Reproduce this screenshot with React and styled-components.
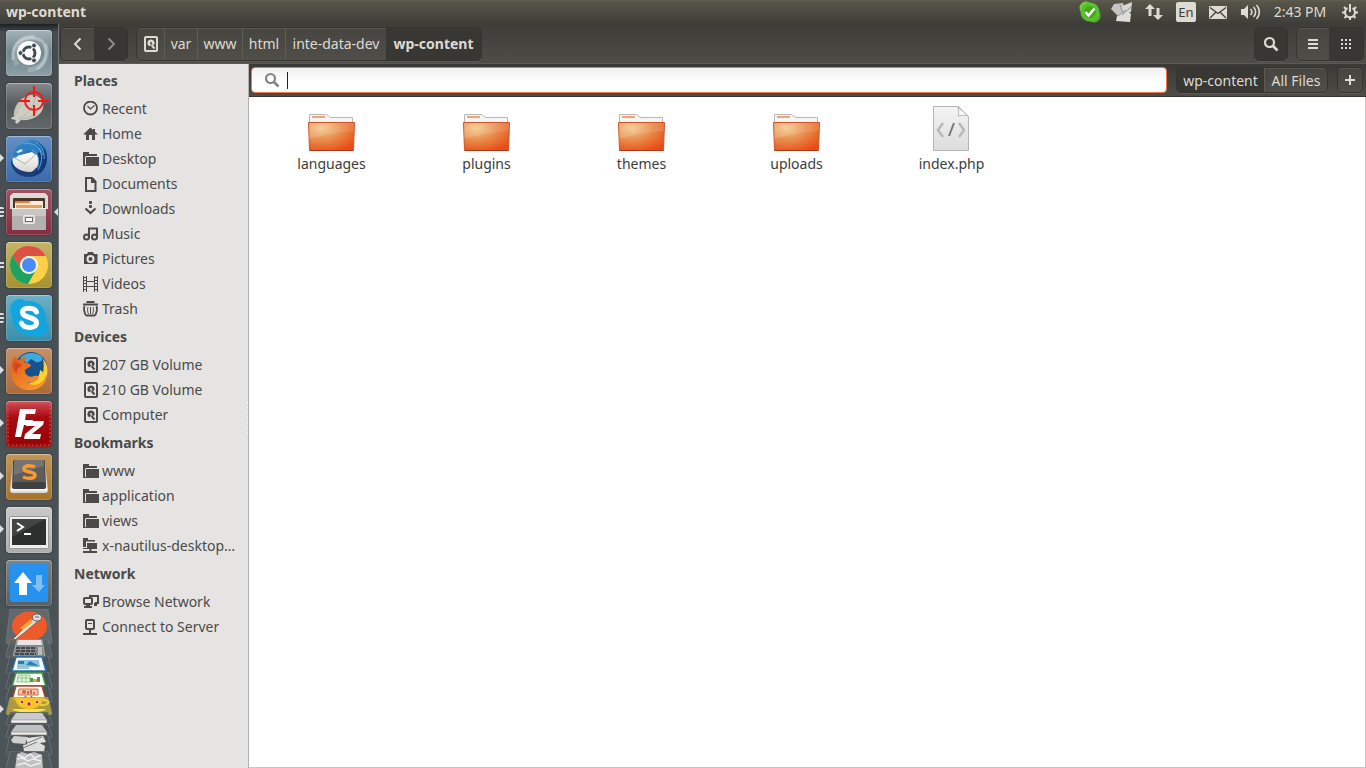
import React from "react";
import styled, { createGlobalStyle, css } from "styled-components";

const GlobalStyle = createGlobalStyle`
  * { box-sizing: border-box; }
  body { margin: 0; background: #fff; }
  body, button, input { font-family: "Noto Sans", "Open Sans", sans-serif; font-size: 14px; }
  button { margin: 0; padding: 0; border: 0; background: none; color: inherit; cursor: default; }
  svg { display: block; flex: none; }
`;

const Desktop = styled.div`
  display: flex;
  flex-direction: column;
  min-height: 100vh;
`;

/* ---------- top panel ---------- */

const Panel = styled.header`
  display: flex;
  align-items: center;
  justify-content: space-between;
  height: 24px;
  padding: 0 5px 0 6px;
  background: linear-gradient(#5f5d50 0, #575549 2px, #3e3d38 100%);
  color: #dfdbd2;
`;

const PanelTitle = styled.h1`
  margin: 0;
  font-size: 14px;
  line-height: 24px;
  font-weight: 700;
`;

const Indicators = styled.div`
  display: flex;
  align-items: center;
  gap: 10px;
`;

const Indicator = styled.button`
  display: flex;
  align-items: center;
  justify-content: center;
  height: 24px;
  min-width: 22px;
`;

const Clock = styled.time`
  width: 58px;
  text-align: center;
  white-space: nowrap;
  line-height: 24px;
`;

const LangBadge = styled.span`
  width: 20px;
  height: 20px;
  border-radius: 2px;
  background: #dfdbd2;
  color: #3c3b37;
  font-size: 13px;
  line-height: 20px;
  text-align: center;
`;

/* ---------- launcher ---------- */

const Body = styled.div`
  display: flex;
  flex: 1;
  min-height: 0;
`;

const Launcher = styled.nav`
  flex: none;
  width: 59px;
  height: calc(100vh - 24px);
  padding: 6px 7px 0 6px;
  overflow: hidden;
  border-right: 1px solid #727679;
  background: linear-gradient(#1c2022 0, #464d51 8px, #4b5458 100%);
`;

const TileList = styled.div`
  display: flex;
  flex-direction: column;
  gap: 7px;
`;

const Tile = styled.button`
  position: relative;
  flex: none;
  width: 46px;
  height: 46px;
  border-radius: 4px;
  background: ${(p) => p.$bg};
  box-shadow: inset 0 0 0 1px rgba(255, 255, 255, 0.15), inset 0 1px 1px rgba(255, 255, 255, 0.3), 0 0 2px rgba(0, 0, 0, 0.5);
`;

const mark = css`
  position: absolute;
  top: 18px;
`;

const Arrow = styled.i`
  ${mark}
  left: -6px;
  border: 4px solid transparent;
  border-left-color: #dcdedf;
  border-right-width: 0;
`;

const ActiveArrow = styled.i`
  ${mark}
  right: -7px;
  border: 5px solid transparent;
  border-right-color: #dcdedf;
  border-left-width: 0;
`;

const Bars = styled.i`
  ${mark}
  left: -6px;
  width: 4px;
  height: 10px;
  border-radius: 0 2px 2px 0;
  background: ${(p) =>
    p.$count === 3
      ? "repeating-linear-gradient(#dcdedf 0 2px, transparent 2px 4px)"
      : "linear-gradient(transparent 2px, #dcdedf 2px 4px, transparent 4px 6px, #dcdedf 6px 8px, transparent 8px)"};
`;

const Stack = styled.div`
  display: flex;
  flex-direction: column;
  margin: 3px -2px 0;
`;

const Folded = styled.button`
  position: relative;
  flex: none;
  height: ${(p) => p.$show}px;
`;

const FoldedArrow = styled.i`
  position: absolute;
  top: 8px;
  left: -4px;
  border: 4px solid transparent;
  border-left-color: #dcdedf;
  border-right-width: 0;
`;

/* ---------- window ---------- */

const Window = styled.main`
  display: flex;
  flex: 1;
  flex-direction: column;
  min-width: 0;
`;

const Toolbar = styled.div`
  display: flex;
  align-items: center;
  gap: 8px;
  height: 40px;
  padding: 0 2px 0 1px;
  border-bottom: 1px solid #5a5952;
  background: linear-gradient(#3e3d39, #4d4c46);
  color: #dfdbd2;
`;

const Group = styled.div`
  display: flex;
  border: 1px solid #35342f;
  border-radius: 5px;
  background: linear-gradient(#46453f, #4f4e48);
  box-shadow: 0 1px 0 #5b5a53, inset 0 1px 0 #57564f;
  overflow: hidden;
`;

const ToolButton = styled.button`
  display: flex;
  align-items: center;
  justify-content: center;
  width: ${(p) => p.$w || 33}px;
  height: ${(p) => p.$h || 32}px;
  border-left: ${(p) => (p.$divided ? "1px solid #5d5c55" : "0")};
  background: ${(p) => (p.$pressed ? "#383733" : "transparent")};
  color: ${(p) => (p.$muted ? "#8f8c85" : "inherit")};
  font-weight: ${(p) => (p.$bold ? 700 : 400)};
  white-space: nowrap;
`;

const Spacer = styled.div`
  flex: 1;
`;

const Columns = styled.div`
  display: flex;
  flex: 1;
`;

const Sidebar = styled.aside`
  position: relative;
  flex: none;
  width: 190px;
  padding-top: 1px;
  border-right: 1px solid #b3b0ac;
  background: #e6e4e2;
  color: #4a4a4a;
`;

const Grip = styled.i`
  position: absolute;
  top: 338px;
  right: 0;
  width: 1px;
  height: 31px;
  background: repeating-linear-gradient(#fff 0 1px, transparent 1px 5px);
`;

const SectionTitle = styled.h2`
  margin: 0;
  padding-left: 15px;
  font-size: 14px;
  line-height: 31px;
  font-weight: 700;
`;

const PlaceList = styled.ul`
  margin: 0;
  padding: 0;
  list-style: none;
`;

const Place = styled.a`
  display: flex;
  align-items: center;
  gap: 3px;
  height: 25px;
  padding: 0 4px 0 24px;
  color: inherit;
  text-decoration: none;
`;

const PlaceName = styled.span`
  overflow: hidden;
  text-overflow: ellipsis;
  white-space: nowrap;
  line-height: 25px;
`;

const Content = styled.section`
  display: flex;
  flex: 1;
  flex-direction: column;
  min-width: 0;
  background: #fff;
`;

const SearchBar = styled.div`
  display: flex;
  align-items: center;
  gap: 9px;
  height: 33px;
  padding: 0 3px 0 2px;
  border-bottom: 1px solid #35342f;
  background: linear-gradient(#3a3935, #4d4c46);
  color: #dfdbd2;
`;

const SearchField = styled.label`
  display: flex;
  align-items: center;
  flex: 1;
  height: 26px;
  padding-left: 12px;
  border: 1px solid #f07746;
  border-radius: 4px;
  background: linear-gradient(#f1f1f1, #fff 60%);
`;

const Caret = styled.i`
  width: 1px;
  height: 17px;
  margin-left: 7px;
  background: #222;
`;

const SearchInput = styled.input`
  flex: 1;
  min-width: 0;
  border: 0;
  outline: 0;
  background: transparent;
  color: #3c3c3c;
  caret-color: transparent;
`;

const FileGrid = styled.div`
  display: flex;
  flex: 1;
  flex-wrap: wrap;
  align-content: flex-start;
  padding: 8px 5px;
  border-right: 1px solid #c8c6c3;
  border-bottom: 1px solid #c8c6c3;
`;

const FileItem = styled.a`
  display: flex;
  flex-direction: column;
  align-items: center;
  width: 155px;
  color: #3c3c3c;
  text-decoration: none;
  line-height: 22px;
`;

/* ---------- symbolic icons ---------- */

const Sym = ({ size = 16, children }) => (
  <svg width={size} height={size} viewBox="0 0 16 16" fill="currentColor" aria-hidden="true">
    {children}
  </svg>
);
const line = { fill: "none", stroke: "currentColor", strokeWidth: 2 };

const symbols = {
  recent: (
    <>
      <circle cx="7.5" cy="7" r="6.5" {...line} strokeWidth="1.8" />
      <path d="M4.5 5l3 3 4-3.5" {...line} strokeWidth="1.1" />
    </>
  ),
  home: <path d="M7.5 1.5L0 8.5h3V14h3V9h3v5h3V8.5h3L12 5.700V3h-2v.9z" />,
  folder: (
    <>
      <path d="M0 1h6v2h8v2H3v10H0z" />
      <path d="M2.500 5.500H14" stroke="#e6e4e2" />
      <path d="M3 6h13v9H3z" />
      <path d="M2.500 6v8" stroke="#e6e4e2" />
    </>
  ),
  document: <path d="M3 2h6l3.500 3.500V15H3zM9 2v4h3.500" {...line} />,
  download: (
    <>
      <rect x="6" y="0" width="3" height="3" rx="1" />
      <rect x="6" y="4" width="3" height="3" rx="1" />
      <path d="M2.500 7.500l5 4.500 5-4.500" {...line} strokeWidth="2.200" />
    </>
  ),
  music: (
    <>
      <path d="M6 11V2.500h8V10" {...line} />
      <circle cx="3.500" cy="11" r="2.500" {...line} />
      <circle cx="11.500" cy="11" r="2.500" {...line} />
    </>
  ),
  camera: (
    <path
      fillRule="evenodd"
      d="M1 3h3l1-2h5l1 2h3.500v10H1zM7.500 4a4 4 0 100 8 4 4 0 000-8zm0 2a2 2 0 110 4 2 2 0 010-4z"
    />
  ),
  video: (
    <>
      <path d="M.5 0v16M3.500 0v16M11.500 0v16M14.500 0v16M4 5.500h8M4 10.500h8" {...line} strokeWidth="1" />
      <path d="M2 1v15M13 1v15" {...line} strokeDasharray="1 2" />
    </>
  ),
  trash: (
    <>
      <path d="M0 3.500h15M3.500 1h8" {...line} />
      <path d="M1.500 5C.5 8 1.500 13.500 3.500 14.500h8c2-1 3-6.500 2-9.500" {...line} strokeWidth="1.800" />
      <path d="M5 6c-.8 2-.5 5 .5 7M10 6c.8 2 .5 5-.5 7M7.500 6v7" {...line} strokeWidth="1" />
    </>
  ),
  drive: (
    <>
      <rect x="2" y="1" width="12" height="14" rx="1" {...line} />
      <path
        fillRule="evenodd"
        d="M8 3.500a3.500 3.500 0 00-1.200 6.800l1.400-2.200 2.800.9a3.500 3.500 0 00-3-5.500zM8 6a1 1 0 110 2 1 1 0 010-2z"
      />
      <path d="M8.500 9l3 3.500" {...line} />
    </>
  ),
  remote: (
    <>
      <path d="M0 0h5v2h7v1.500H3V9H0z" />
      <path d="M4 5h10v6H8.500v2H14v2H0v-2h6.500v-2H0v-1h4z" />
    </>
  ),
  network: (
    <>
      <path d="M6 2h9v7h-3" {...line} />
      <rect x="1" y="4" width="8" height="6" rx="1" {...line} fill="#e6e4e2" />
      <path d="M3 10h4v2h2v2H1v-2h2zM11 9h3v3h-3z" />
    </>
  ),
  server: (
    <>
      <rect x="3" y="1" width="8" height="9" rx="1" {...line} />
      <path d="M5 4h4v1H5zM6 10h2v4h6v2H0v-2h6z" />
    </>
  ),
  back: <path d="M10.500 2.500L5 8l5.500 5.500" {...line} />,
  forward: <path d="M5.500 2.500L11 8l-5.500 5.500" {...line} />,
  search: (
    <>
      <circle cx="6.500" cy="6.500" r="4.500" {...line} strokeWidth="2.200" />
      <path d="M9.500 9.500l5 5" {...line} strokeWidth="2.600" />
    </>
  ),
  list: <path d="M3 3h10v2H3zM3 7h10v2H3zM3 11h10v2H3z" />,
  grid: <path d="M3 4h10M3 8h10M3 12h10" {...line} strokeDasharray="2 2" />,
  plus: <path d="M8 3v10M3 8h10" {...line} />,
};

const Icon = ({ name, size }) => <Sym size={size}>{symbols[name]}</Sym>;

/* ---------- panel icons ---------- */

const SkypeStatus = () => (
  <svg width="22" height="22" viewBox="0 0 22 22">
    <circle cx="7" cy="7" r="6.500" fill="#6fce3f" />
    <circle cx="15" cy="15" r="6.500" fill="#4dae28" />
    <circle cx="11" cy="11" r="9.500" fill="#58c22c" />
    <circle cx="11" cy="11" r="6" fill="#42aa1c" />
    <path d="M6.500 11l3 3.500 6-7" fill="none" stroke="#fff" strokeWidth="2.600" />
  </svg>
);

const Papers = () => (
  <svg width="22" height="22" viewBox="0 0 22 22">
    <path d="M0 8l3-5 9-1 2 9-7 4z" fill="#c4c4c2" />
    <path d="M11 5l10-4-1 10-9 3z" fill="#d6d6d4" />
    <path d="M6 15l9-6 5 4-1 8-14-1z" fill="#dddddb" />
    <path d="M11 14l9-8M12 12L9 4M7 15l8-6" stroke="#929290" fill="none" />
  </svg>
);

const Transfer = () => (
  <svg width="20" height="18" viewBox="0 0 20 18" fill="#dfdbd2">
    <path d="M6 1l5 5H7.500v7h-3V6H1zM14 17l-5-5h3.500V5h3v7H19z" />
  </svg>
);

const Mail = () => (
  <svg width="18" height="13" viewBox="0 0 18 13">
    <rect width="18" height="13" rx="1" fill="#dfdbd2" />
    <path d="M1 1.500l8 6 8-6M1 12l6-6M17 12l-6-6" stroke="#3e3d38" fill="none" strokeWidth="1.200" />
  </svg>
);

const Speaker = () => (
  <svg width="21" height="16" viewBox="0 0 21 16">
    <path d="M1 5h3l4-4v14l-4-4H1z" fill="#dfdbd2" />
    <path d="M10.500 5a4 4 0 010 6M13.500 3a7 7 0 010 10M16.500 1a10 10 0 010 14" fill="none" stroke="#dfdbd2" strokeWidth="1.600" />
  </svg>
);

const Cog = () => (
  <svg width="16" height="16" viewBox="0 0 16 16" stroke="#dfdbd2" fill="none" strokeWidth="2">
    <path d="M5.500 4a5 5 0 105 0" />
    <path d="M8 0v8" />
    <path d="M0 8.500h3M13 8.500h3M2 3l2 2M14 3l-2 2M2.500 14l2-2M13.500 14l-2-2M8 13v3" />
  </svg>
);

/* ---------- launcher art ---------- */

const Art = ({ children }) => (
  <svg width="46" height="46" viewBox="0 0 46 46" aria-hidden="true">{children}</svg>
);

const art = {
  dash: (
    <Art>
      <path d="M7 30C5 12 20 2 36 11c8 8 4 22-5 28" fill="none" stroke="#fff" strokeOpacity=".3" strokeWidth="3" />
      <path d="M11 35C3 18 15 6 29 7M39 14c5 13-2 25-17 26" fill="none" stroke="#fff" strokeOpacity=".2" strokeWidth="5" />
      <circle cx="23" cy="23" r="12" fill="#fff" />
      <circle cx="23" cy="23" r="6" fill="none" stroke="#3f4b50" strokeWidth="3" />
      <path d="M23 23h-9M23 23l5-8M23 23l5 8" stroke="#fff" strokeWidth="1.500" />
      <circle cx="23" cy="23" r="4" fill="#fff" />
      <g fill="#3f4b50" stroke="#fff" strokeWidth=".8">
        <circle cx="14.500" cy="23" r="2.400" />
        <circle cx="28" cy="15.500" r="2.400" />
        <circle cx="28" cy="30.500" r="2.400" />
      </g>
    </Art>
  ),
  target: (
    <Art>
      <path d="M8 34C7 22 16 13 25 12c8 0 14 6 12 13-2 8-12 13-22 12l-4 4-2-2 1-2-5-1 1-2z" fill="#cdcdc3" />
      <path d="M9 34c2-8 6-15 15-20M12 36c7-3 14-8 18-22M14 36c8 0 18-4 22-14M9 31c0-7 4-12 10-16" stroke="#b4b5ab" fill="none" />
      <circle cx="28" cy="18" r="9" fill="none" stroke="#ee1c1c" strokeWidth="2" />
      <path d="M28 3v11M28 22v11M13 18h11M32 18h11" stroke="#fb1414" strokeWidth="2" />
    </Art>
  ),
  thunderbird: (
    <Art>
      <defs>
        <linearGradient id="tb" x2="1" y2="1">
          <stop offset="0" stopColor="#5fb6e6" />
          <stop offset=".5" stopColor="#1c63a8" />
          <stop offset="1" stopColor="#0b2358" />
        </linearGradient>
        <linearGradient id="letter" x2="0" y2="1">
          <stop offset="0" stopColor="#fff" />
          <stop offset="1" stopColor="#d5d1ca" />
        </linearGradient>
      </defs>
      <path d="M12 10C16 3 27 2 31 5c7 4 11 10 10 18 0 10-8 18-18 18C12 41 4 34 5 24c0-5 3-10 7-14z" fill="url(#tb)" />
      <path d="M7 21l19-5 6 3 1 10-9 9-14-5c-3-3-4-8-3-12z" fill="url(#letter)" />
      <path d="M7 21l12 7 10-9" stroke="#b5b1aa" fill="none" />
      <path d="M5 23c2 8 9 13 19 13 4 0 8-4 9-8 1 5-3 11-9 12C13 42 4 34 5 23z" fill="#1c3f7c" />
      <path d="M31 18l8-4 2 10-5 12-7 2c4-6 5-13 2-20z" fill="#12397a" />
      <path d="M11 21c1-7 9-10 14-6l5 4 5-5C31 6 20 5 12 10c-4 4-5 9-5 12z" fill="#2f80c2" />
      <path d="M18 8c8-2 16 2 19 11M29 6c6 3 10 9 9 17M26 14c7 3 8 12 5 18M33 12c4 8 3 15-1 22" stroke="#57abe0" fill="none" />
      <path d="M10 16l5-3 2 2-5 2z" fill="#e0edf5" />
    </Art>
  ),
  files: (
    <Art>
      <path d="M7 4h32l3 3v13H4V7z" fill="#dddbd8" />
      <rect x="7" y="9" width="32" height="12" rx="1" fill="#4a3527" />
      <path d="M9 12h28v8H9z" fill="#ef7d2c" />
      <path d="M9 14h14l2-2h12v8H9z" fill="#f9ebd7" />
      <path d="M10 16h26v4H10z" fill="#e9a05d" />
      <path d="M6 19h34v22H6z" fill="#b3b1ae" />
      <path d="M6 19h34v8H6z" fill="#c8c6c3" />
      <path d="M6 19h34v1H6z" fill="#efeeec" />
      <rect x="17.500" y="26.500" width="11" height="8" rx="1" fill="#d7d5d2" stroke="#efeeec" />
      <rect x="19.500" y="28.500" width="7" height="4" fill="#fff" stroke="#706e6b" />
    </Art>
  ),
  chrome: (
    <Art>
      <circle cx="23" cy="23" r="19" fill="#fcd148" />
      <path d="M6.500 13.500A19 19 0 0139.700 14H23a9 9 0 00-8 13z" fill="#dc5146" />
      <path d="M6.500 13.500A19 19 0 0022 42l8-14a9 9 0 01-15-1z" fill="#1fa15f" />
      <circle cx="23" cy="23" r="9" fill="#f3f3f1" />
      <circle cx="23" cy="23" r="7" fill="#4a8af4" />
    </Art>
  ),
  skype: (
    <Art>
      <g fill="#12a5df">
        <circle cx="14" cy="14" r="10" />
        <circle cx="32" cy="32" r="10" />
        <circle cx="23" cy="23" r="17" />
      </g>
      <path d="M30.500 17c-2-5-14-5-14 0 0 7 14 4 14 11 0 6-13 6-15 0" fill="none" stroke="#fff" strokeWidth="5" strokeLinecap="round" />
    </Art>
  ),
  firefox: (
    <Art>
      <defs>
        <linearGradient id="fox" x2=".8" y2="1">
          <stop offset="0" stopColor="#e2571c" />
          <stop offset="1" stopColor="#f79a2b" />
        </linearGradient>
      </defs>
      <circle cx="25" cy="20" r="16" fill="#17528f" />
      <path d="M14 10c5-6 16-7 22-1 2 3-2 6-6 5l-5-3-4 4z" fill="#3fa9dc" />
      <path d="M37 11c7 7 6 22-5 29-10 4-20 0-22-6 12 6 24-2 24-12 2 1 3 2 3 3 1-5 1-10 0-14z" fill="#fbd22f" />
      <path d="M6 13l2-5 4 4c2-1 4-1 7-4 1 3-1 4-1 6 2 1 5 1 7 3 0 2-4 3-6 5-1 5 5 8 9 6 4-1 6 1 4 3-4 5-9 4-11 3 7 7 19 0 19-8 2 9-6 16-17 16C9 42 1 27 6 13z" fill="url(#fox)" />
      <path d="M8 14c3 0 6 1 8 4-4 1-6 4-5 8-3-3-5-7-3-12z" fill="#d3481c" />
    </Art>
  ),
  filezilla: (
    <Art>
      <rect x="2" y="2" width="42" height="42" rx="2" fill="none" stroke="#dc5a5a" strokeDasharray="2 2" />
      <path d="M14 8h16l-1 5h-9l-1 6h8l-1 5h-8l-3 12H9z" fill="#fff" />
      <path d="M21 20h17l-1 4-11 9h9l-1 5H18l1-5 10-8h-9z" fill="#fff" />
    </Art>
  ),
  sublime: (
    <Art>
      <path d="M7 8L4 36q0 3 3 3h32q3 0 3-3L39 8z" fill="#dcd9d5" />
      <path d="M5 34h36v3H5z" fill="#f5f4f2" />
      <path d="M9 6h28q2 0 2 2l1 25q0 2-2 2H8q-2 0-2-2L7 8q0-2 2-2z" fill="#414141" />
      <path d="M10 6h26q2 0 2 2l1 20H7L8 8q0-2 2-2z" fill="#5d5d5d" />
      <path d="M10 6h26q2 0 2 2v4L8 21V8q0-2 2-2z" fill="#737373" />
      <path d="M29 13c-4-2-11-2-11 2 0 4 11 2 11 6 0 4-7 4-12 2" fill="none" stroke="#fb9a2e" strokeWidth="3.500" />
    </Art>
  ),
  terminal: (
    <Art>
      <rect x="3.500" y="9.500" width="39" height="32" rx="1" fill="#eee" stroke="#999" />
      <rect x="6" y="12" width="34" height="26" fill="#2d2f2f" />
      <path d="M6 12h34L6 30z" fill="#424444" />
      <path d="M11 16l6 4-6 4M18 27h7" fill="none" stroke="#fff" strokeWidth="2" />
    </Art>
  ),
  sync: (
    <Art>
      <rect x="4" y="4" width="38" height="38" rx="2" fill="#2492ee" />
      <path d="M17 12l9 11h-5v12h-8V23H8z" fill="#fff" />
      <path d="M30 15h6v10h3l-6 7-7-7h4z" fill="#83bef0" />
    </Art>
  ),
};

/* Perspective-folded icons that pile up at the end of the launcher. */
const FoldedArt = ({ height, plate, children }) => (
  <svg width="50" height={height} viewBox={`0 0 50 ${height}`} aria-hidden="true">
    <path d={`M6 0h38l4 ${height - 2}-1 2H3l-1-2z`} fill={plate} fillOpacity=".8" stroke="#8b9091" strokeOpacity=".45" />
    {children}
  </svg>
);

const sheet = (color, inner) => (
  <>
    <path d="M12 1h26l4 14H8z" fill="#fff" stroke={color} strokeWidth="1.500" />
    {inner}
  </>
);

const folded = [
  {
    label: "Postman", show: 30, height: 35, plate: "#666f73",
    body: (
      <>
        <ellipse cx="25.500" cy="17" rx="17.500" ry="14.500" fill="#ee5a2a" />
        <path d="M5 32l12-8 4 5-8 3z" fill="#ee5a2a" />
        <path d="M9 30L30 9l4 3-14 12-9 7z" fill="#e3e1dc" stroke="#6b5a50" strokeWidth=".8" />
        <path d="M16 19l11-9 2 3-10 8z" fill="#f5a53a" />
        <ellipse cx="33" cy="8.500" rx="4.500" ry="3.500" fill="#ddd" stroke="#666" />
        <path d="M31 8h4" stroke="#666" />
      </>
    ),
  },
  {
    label: "Calculator", show: 17, height: 19, plate: "#596163",
    body: (
      <>
        <path d="M13 1h25l3 17H9z" fill="#85878a" stroke="#a5a7a8" />
        <path d="M14 1h23l1 5H13z" fill="#e4e5e4" />
        <path d="M12 9h20M12 12h20M11 15h21" stroke="#45484a" strokeWidth="2" strokeDasharray="4 1" />
        <path d="M36 8v8" stroke="#b9bbbc" strokeWidth="4" />
      </>
    ),
  },
  { label: "Writer", show: 16, height: 18, plate: "#4a5458", body: sheet("#2374aa", <><path d="M14 4h21l1 7H13z" fill="#8cc3e0" /><path d="M14 5h6v3h-6zM22 9l4-4 9 5z" fill="#2a7cac" /><path d="M13 12h12" stroke="#3c8fbd" /></>) },
  { label: "Calc", show: 13, height: 17, plate: "#4a5458", body: sheet("#43a047", <><path d="M14 3h12v7H13zM14 6h12M18 3v7M22 3v7" stroke="#8ccb86" fill="#e2f1dc" /><path d="M26 10V6h3v4zM33 10V5h3v5z" fill="#43a047" /><path d="M29 10V7h4v3z" fill="#e5a443" /></>) },
  { label: "Impress", show: 12, height: 17, plate: "#4a5458", body: sheet("#a84b28", <><path d="M15 4h19v6H14z" fill="#f4c7b0" stroke="#d0683c" /><circle cx="20" cy="7" r="2" fill="#d0683c" /><path d="M24 9V6M27 9V5M30 9V7M22 11l-2 3M27 11l2 3" stroke="#b5522a" strokeWidth="1.500" /></>) },
  {
    label: "Teacup", show: 15, height: 18, plate: "#c4ab35", arrow: true,
    body: (
      <>
        <path d="M11 1h28c0 6-5 11-14 11S12 8 11 1z" fill="#f5c51e" />
        <path d="M8 12h34c-6 5-28 5-34 0z" fill="#ffe24d" />
        <path d="M39 3c9 0 6 6-3 5" fill="none" stroke="#f0cd3a" strokeWidth="2" />
        <g fill="#d22525" stroke="#fff" strokeWidth=".6">
          <circle cx="18" cy="5" r="1.800" />
          <circle cx="25" cy="7" r="2.200" />
          <circle cx="33" cy="5" r="1.800" />
        </g>
      </>
    ),
  },
  { label: "Disk 1", show: 12, height: 14, plate: "#4c5457", body: <><path d="M12 1h26l5 7H7z" fill="#c9cacb" /><path d="M7 8h36v3H7z" fill="#efefef" stroke="#777" strokeWidth=".5" /></> },
  { label: "Disk 2", show: 11, height: 14, plate: "#4c5457", body: <><path d="M12 1h26l5 7H7z" fill="#bfc0c1" /><path d="M7 8h36v3H7z" fill="#e6e6e6" stroke="#777" strokeWidth=".5" /></> },
  { label: "Workspaces", show: 16, height: 20, plate: "#4c5457", body: <><path d="M7 5l3-4 14 1-3 7-12-1z" fill="#cfcfcd" /><path d="M23 3l16-2 3 6-19 3z" fill="#e2e2e0" /><path d="M19 10l15-3 7 4-1 6-20-1z" fill="#dcdcda" /><path d="M21 9l17-7M19 13l14-6" stroke="#777" fill="none" /></> },
  { label: "Rubbish Bin", show: 16, height: 20, plate: "#545b5e", body: <><path d="M13 3l5-2 6 2 6-2 8 3 1 14H11z" fill="#bfc1c1" /><path d="M14 4l7 3 5-4 5 4 6-3M13 8l5-1 6 3 5-2 8 2M13 14l8-2 5 3 11-3" stroke="#eee" fill="none" strokeWidth="1.500" /></> },
];

const tiles = [
  { label: "Search your computer", art: "dash", bg: "linear-gradient(#a4b2b7, #71868f 50%, #8d9fa7)" },
  { label: "Target", art: "target", bg: "linear-gradient(#85898c, #55585b 50%, #65686b)" },
  { label: "Thunderbird Mail", art: "thunderbird", bg: "linear-gradient(#658fc4, #3b6aaa)", arrow: true },
  { label: "Files", art: "files", bg: "linear-gradient(#a05163, #842e40)", bars: 3, active: true },
  { label: "Google Chrome", art: "chrome", bg: "linear-gradient(#c4b467, #a5922f)", bars: 2 },
  { label: "Skype", art: "skype", bg: "linear-gradient(#6eb0c5, #3a8eaa)", bars: 3 },
  { label: "Firefox", art: "firefox", bg: "linear-gradient(#c69068, #ab6a3a)", arrow: true },
  { label: "FileZilla", art: "filezilla", bg: "linear-gradient(#d05058, #a80b12 35%, #970003)", arrow: true },
  { label: "Sublime Text", art: "sublime", bg: "linear-gradient(#c29556, #a9722a)", arrow: true },
  { label: "Terminal", art: "terminal", bg: "linear-gradient(#c9c9c9, #adadad)", arrow: true },
  { label: "Sync", art: "sync", bg: "linear-gradient(#7a8285, #596164)" },
];

/* ---------- file icons ---------- */

const FolderArt = () => (
  <svg width="47" height="48" viewBox="0 0 47 48" aria-hidden="true">
    <defs>
      <radialGradient id="folder" cx=".28" cy=".2" r=".9">
        <stop offset="0" stopColor="#f3c98c" />
        <stop offset=".5" stopColor="#e88b4a" />
        <stop offset="1" stopColor="#e84d17" />
      </radialGradient>
    </defs>
    <path d="M1.500 20V9.500h17l4 3h22V20z" fill="#f5f5f4" stroke="#b8b8b5" />
    <path d="M4 11h13v2H4z" fill="#f2a37a" />
    <path d="M.5 17.500h46l-1 28h-44z" fill="url(#folder)" stroke="#ca5528" />
    <path d="M1 18h45v8Q20 28 1 34z" fill="#fff" fillOpacity=".12" />
    <path d="M2 45.500h43" stroke="#a8391a" />
  </svg>
);

const PhpArt = () => (
  <svg width="47" height="48" viewBox="0 0 47 48" aria-hidden="true">
    <defs>
      <linearGradient id="page" x2="0" y2="1">
        <stop offset="0" stopColor="#f4f4f4" />
        <stop offset="1" stopColor="#dcdcdc" />
      </linearGradient>
    </defs>
    <path d="M5.500 1.500h25l10 10v34h-35z" fill="url(#page)" stroke="#b5b5b5" />
    <path d="M30 2c1 4 1 6 0 9 4-1 7-1 10 0z" fill="#fff" stroke="#b5b5b5" />
    <path d="M15 18l-5 7 5 7M31 18l5 7-5 7" fill="none" stroke="#b8b8b8" strokeWidth="2.500" />
    <path d="M26 18l-5 13" stroke="#777" strokeWidth="2" />
  </svg>
);

/* ---------- data ---------- */

const sections = [
  { title: "Places", items: [["recent", "Recent"], ["home", "Home"], ["folder", "Desktop"], ["document", "Documents"], ["download", "Downloads"], ["music", "Music"], ["camera", "Pictures"], ["video", "Videos"], ["trash", "Trash"]] },
  { title: "Devices", items: [["drive", "207 GB Volume"], ["drive", "210 GB Volume"], ["drive", "Computer"]] },
  { title: "Bookmarks", items: [["folder", "www"], ["folder", "application"], ["folder", "views"], ["remote", "x-nautilus-desktop…"]] },
  { title: "Network", items: [["network", "Browse Network"], ["server", "Connect to Server"]] },
];

const crumbs = [["var", 33], ["www", 45], ["html", 43], ["inte-data-dev", 101]];
const files = ["languages", "plugins", "themes", "uploads", "index.php"];

export default function App() {
  return (
    <Desktop>
      <GlobalStyle />
      <Panel>
        <PanelTitle>wp-content</PanelTitle>
        <Indicators>
          <Indicator aria-label="Skype status"><SkypeStatus /></Indicator>
          <Indicator aria-label="Clipboard"><Papers /></Indicator>
          <Indicator aria-label="Connections"><Transfer /></Indicator>
          <Indicator aria-label="Keyboard language"><LangBadge>En</LangBadge></Indicator>
          <Indicator aria-label="Messages"><Mail /></Indicator>
          <Indicator aria-label="Volume"><Speaker /></Indicator>
          <Clock>2:43 PM</Clock>
          <Indicator aria-label="Session"><Cog /></Indicator>
        </Indicators>
      </Panel>

      <Body>
        <Launcher aria-label="Launcher">
          <TileList>
            {tiles.map((t) => (
              <Tile key={t.label} aria-label={t.label} $bg={t.bg}>
                {art[t.art]}
                {t.arrow && <Arrow />}
                {t.bars && <Bars $count={t.bars} />}
                {t.active && <ActiveArrow />}
              </Tile>
            ))}
          </TileList>
          <Stack>
            {folded.map((f) => (
              <Folded key={f.label} aria-label={f.label} $show={f.show}>
                <FoldedArt height={f.height} plate={f.plate}>{f.body}</FoldedArt>
                {f.arrow && <FoldedArrow />}
              </Folded>
            ))}
          </Stack>
        </Launcher>

        <Window>
          <Toolbar>
            <Group>
              <ToolButton aria-label="Back"><Icon name="back" /></ToolButton>
              <ToolButton aria-label="Forward" $muted $pressed><Icon name="forward" /></ToolButton>
            </Group>
            <Group>
              <ToolButton aria-label="Computer" $w={27}><Icon name="drive" /></ToolButton>
              {crumbs.map(([name, w]) => (
                <ToolButton key={name} $w={w} $divided>{name}</ToolButton>
              ))}
              <ToolButton $w={95} $pressed $bold>wp-content</ToolButton>
            </Group>
            <Spacer />
            <Group>
              <ToolButton aria-label="Search" $w={32} $pressed><Icon name="search" /></ToolButton>
            </Group>
            <Group>
              <ToolButton aria-label="List view" $w={32}><Icon name="list" /></ToolButton>
              <ToolButton aria-label="Grid view" $w={34} $pressed><Icon name="grid" /></ToolButton>
            </Group>
          </Toolbar>

          <Columns>
            <Sidebar>
              {sections.map((s) => (
                <section key={s.title}>
                  <SectionTitle>{s.title}</SectionTitle>
                  <PlaceList>
                    {s.items.map(([icon, name]) => (
                      <li key={name}>
                        <Place href="#">
                          <Icon name={icon} />
                          <PlaceName>{name}</PlaceName>
                        </Place>
                      </li>
                    ))}
                  </PlaceList>
                </section>
              ))}
              <Grip />
            </Sidebar>

            <Content>
              <SearchBar>
                <SearchField>
                  <svg width="16" height="16" viewBox="0 0 16 16" color="#858585" aria-hidden="true">{symbols.search}</svg>
                  <Caret />
                  <SearchInput type="text" aria-label="Search files" />
                </SearchField>
                <Group>
                  <ToolButton $w={87} $h={24} $pressed>wp-content</ToolButton>
                  <ToolButton $w={63} $h={24} $divided>All Files</ToolButton>
                </Group>
                <Group>
                  <ToolButton aria-label="Add filter" $w={24} $h={24}><Icon name="plus" /></ToolButton>
                </Group>
              </SearchBar>
              <FileGrid>
                {files.map((name) => (
                  <FileItem key={name} href="#">
                    {name.endsWith(".php") ? <PhpArt /> : <FolderArt />}
                    {name}
                  </FileItem>
                ))}
              </FileGrid>
            </Content>
          </Columns>
        </Window>
      </Body>
    </Desktop>
  );
}
